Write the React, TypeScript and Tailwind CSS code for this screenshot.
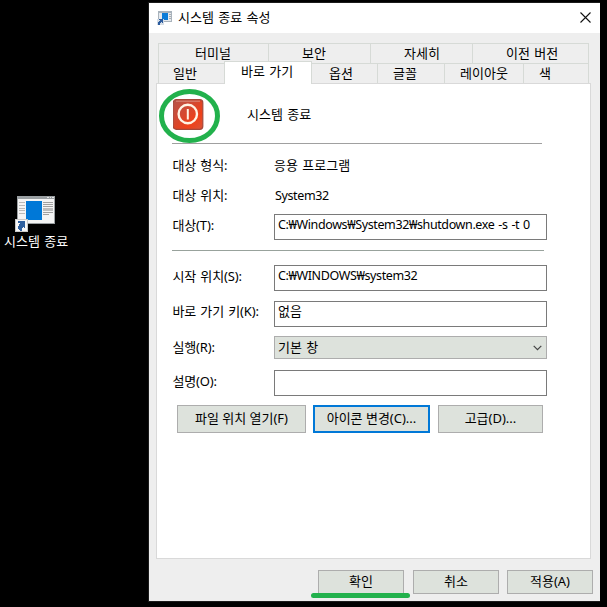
import type { ReactNode } from "react";

function ConsoleIcon({ className }: { className: string }) {
  return (
    <svg className={className} viewBox="0 0 41 37" shapeRendering="crispEdges">
      <rect x="2" y="1" width="38" height="28" fill="#9a9fa2" />
      <rect x="3" y="3" width="36" height="25" fill="#f4f4f4" />
      <path d="M3 3h36v1H3z" fill="#9a9fa2" />
      <path d="M32 2h2v1h-2zM35 2h1v1h-1zM37 2h2v1h-2z" fill="#e4e4e4" />
      <path d="M4 7.5h6M4 10.500h6M4 13.5h6M4 15.500h6M4 18.5h6" stroke="#b9b9b9" />
      <rect x="11" y="6" width="16" height="19" fill="#0078d7" />
      <path d="M28 7.5h10M28 9.5h10M28 11.5h10M28 17.500h10M28 19.5h6" stroke="#a0a0a0" />
      <rect x="28" y="13" width="10" height="3" fill="#bdbdbd" />
      <rect x="0" y="24" width="13" height="13" fill="#c9c9c9" />
      <rect x="1" y="25" width="11" height="11" fill="#f7f7f7" />
      <path d="M3 26h7v7H9v-1H8v1H7v3H5v-1H4v-1H3v-3h1v-2h1v-1H3z" fill="#2f609f" />
    </svg>
  );
}

function SmallConsoleIcon() {
  return (
    <svg className="block h-[16px] w-[16px]" viewBox="0 0 16 16" shapeRendering="crispEdges">
      <rect x="1" y="1" width="14" height="11" fill="#a9b3bc" />
      <rect x="2" y="3" width="12" height="8" fill="#e6eaee" />
      <rect x="5" y="3" width="6" height="7" fill="#0b7cd8" />
      <path d="M12 4.500h2M12 6.500h2M12 8.500h2" stroke="#a8adb2" />
      <rect x="0" y="9" width="7" height="6" fill="#d5dde6" />
      <path d="M2 9h4v4H5v-1H4v1H3v2H1v-3h1v-1h1v-1H2z" fill="#2b5b9e" />
    </svg>
  );
}

function PowerIcon() {
  return (
    <svg className="block h-[31px] w-[31px]" viewBox="0 0 31 31">
      <defs>
        <linearGradient id="power" x1="0" y1="0" x2="1" y2="1">
          <stop offset="0" stopColor="#b5564a" />
          <stop offset=".35" stopColor="#cf4a35" />
          <stop offset=".7" stopColor="#ef4018" />
          <stop offset="1" stopColor="#d9553a" />
        </linearGradient>
      </defs>
      <rect x=".2" y=".7" width="29.6" height="29.6" rx="3" fill="url(#power)" stroke="#a5483a" strokeWidth="1.2" />
      <path d="M3 2.200h24" stroke="#d98a7c" />
      <circle cx="14.8" cy="15" r="9.200" fill="none" stroke="#fff3e4" strokeWidth="2.4" />
      <path d="M14.8 10v10.500" stroke="#fff3e4" strokeWidth="2" />
    </svg>
  );
}

function Tab({ className, children }: { className: string; children: ReactNode }) {
  return <div className={`flex h-full shrink-0 items-center border-[#d6dad6] pb-[2px] ${className}`}>{children}</div>;
}

function Row({ className, labelClass = "pb-[5px]", label, children }: { className: string; labelClass?: string; label: string; children?: ReactNode }) {
  return (
    <div className={`flex items-center ${className}`}>
      <div className={`w-[102px] shrink-0 pl-[0.5px] tracking-[-0.15px] ${labelClass}`}>{label}</div>
      {children}
    </div>
  );
}

function Latin({ children }: { children: ReactNode }) {
  return <span className="text-[12.5px] tracking-[-0.38px]">{children}</span>;
}

function Field({ children }: { children?: ReactNode }) {
  return (
    <div className="flex h-[26px] w-[273px] items-start border border-[#7a7a7a] bg-white pl-[3px]">{children}</div>
  );
}

function Button({ className, children }: { className: string; children: ReactNode }) {
  return (
    <button className={`flex items-center justify-center bg-[#dde2dc] pb-[2px] ${className}`}>{children}</button>
  );
}

export default function App() {
  return (
    <div className="relative flex h-[607px] w-[607px] overflow-hidden bg-black font-['Noto_Sans','Noto_Sans_CJK_KR',sans-serif] text-[13px] leading-[20px] whitespace-nowrap text-black [word-spacing:1px]">
      <div className="w-[148px] shrink-0 pt-[195px]">
        <ConsoleIcon className="ml-[15px] block h-[37px] w-[41px]" />
        <div className="-mt-px pl-1 text-white">시스템 종료</div>
      </div>

      <div className="mt-[2px] flex h-[600px] w-[452px] flex-col border-t border-b border-l border-[#1b1b1b] bg-[#eee]">
        <div className="flex h-[30px] shrink-0 items-center bg-white pr-[9px] pl-[8px]">
          <SmallConsoleIcon />
          <div className="ml-[5px] pb-[3px]">시스템 종료 속성</div>
          <svg className="mb-[2px] ml-auto h-[11px] w-[11px]" viewBox="0 0 11 11">
            <path d="M.5.5l10 10M10.5.5l-10 10" stroke="#111" strokeWidth="1.1" />
          </svg>
        </div>

        <div className="mt-[10px] ml-[9px] flex h-[20px] w-[431px] shrink-0 border-t border-r border-[#d6dad6]">
          <Tab className="w-[110px] border-l pl-[36px]">터미널</Tab>
          <Tab className="w-[102px] border-l pl-[33px]">보안</Tab>
          <Tab className="w-[102px] border-l pl-[33px]">자세히</Tab>
          <Tab className="w-[116px] border-l pl-[33px]">이전 버전</Tab>
        </div>
        <div className="ml-[9px] flex h-[20px] w-[431px] shrink-0 border-t border-r border-[#d6dad6]">
          <Tab className="w-[66px] border-l pl-[14px]">일반</Tab>
          <div className="z-10 -mt-[3px] flex h-[23px] w-[88px] shrink-0 items-center border-t border-r border-l border-[#d6dad6] bg-white pb-[4px] pl-[16px]">
            바로 가기
          </div>
          <Tab className="w-[65px] pl-[17px]">옵션</Tab>
          <Tab className="w-[67px] border-l pl-[15px]">글꼴</Tab>
          <Tab className="w-[79px] border-l pl-[15px]">레이아웃</Tab>
          <Tab className="w-[65px] border-l pl-[15px]">색</Tab>
        </div>

        <div className="ml-[7px] flex h-[476px] w-[435px] shrink-0 flex-col border border-[#d9d9d9] bg-white pl-[15px]">
          <div className="mt-[15px] flex h-[31px] items-center pl-px">
            <PowerIcon />
            <div className="ml-[43px] pb-px">시스템 종료</div>
          </div>
          <div className="mt-[13px] h-px w-[370px] shrink-0 bg-[#a0a0a0]" />
          <Row className="mt-[12px] h-[20px]" labelClass="pb-[3px]" label="대상 형식:">
            <span className="pb-[2px]">응용 프로그램</span>
          </Row>
          <Row className="mt-[10px] h-[20px]" labelClass="pb-[3px]" label="대상 위치:">
            <span className="pb-[2px] pl-px"><Latin>System32</Latin></span>
          </Row>
          <Row className="mt-[8px] h-[26px]" label="대상(T):">
            <Field><Latin>C:₩Windows₩System32₩shutdown.exe -s -t 0</Latin></Field>
          </Row>
          <div className="mt-[10px] h-px w-[372px] shrink-0 bg-[#98a29c]" />
          <Row className="mt-[14px] h-[26px]" label="시작 위치(S):">
            <Field><Latin>C:₩WINDOWS₩system32</Latin></Field>
          </Row>
          <Row className="mt-[10px] h-[26px]" labelClass="pb-[6px]" label="바로 가기 키(K):">
            <Field><span className="-mt-px">없음</span></Field>
          </Row>
          <Row className="mt-[9px] h-[23px]" labelClass="pb-px" label="실행(R):">
            <div className="flex h-[23px] w-[273px] items-center justify-between border border-[#adadad] bg-[#dde2dc] pr-[4px] pl-[3px]">
              <span className="pb-[2px]">기본 창</span>
              <svg className="h-[6px] w-[9px]" viewBox="0 0 9 6">
                <path d="M.7.8l3.8 3.8L8.3.8" fill="none" stroke="#444" strokeWidth="1.2" />
              </svg>
            </div>
          </Row>
          <Row className="mt-[11px] h-[26px]" label="설명(O):">
            <Field />
          </Row>
          <div className="mt-[9px] flex h-[28px] pl-[5px]">
            <Button className="w-[129px] border border-[#adadad]">파일 위치 열기(F)</Button>
            <Button className="ml-[7px] w-[117px] border-2 border-[#0078d7]">아이콘 변경(C)...</Button>
            <Button className="ml-[8px] w-[105px] border border-[#adadad]">고급(D)...</Button>
          </div>
        </div>

        <div className="mt-[11px] flex h-[24px] shrink-0 pl-[169px]">
          <Button className="w-[86px] border border-[#adadad]">확인</Button>
          <Button className="ml-[9px] w-[86px] border border-[#adadad]">취소</Button>
          <Button className="ml-[8px] w-[86px] border border-[#adadad]">적용(A)</Button>
        </div>
      </div>

      <svg className="pointer-events-none absolute inset-0 z-20 h-[607px] w-[607px]" viewBox="0 0 607 607">
        <ellipse cx="189.5" cy="116" rx="28" ry="24.5" fill="none" stroke="#22b14c" strokeWidth="5" />
        <path d="M313.500 595.500H407.500" stroke="#22b14c" strokeWidth="5" strokeLinecap="round" />
      </svg>
    </div>
  );
}
